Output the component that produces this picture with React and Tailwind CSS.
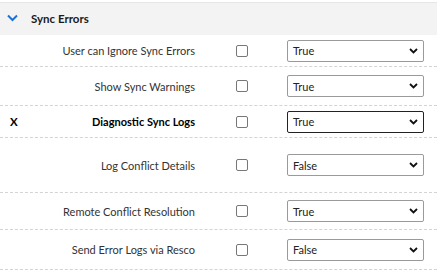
import React from "react";

const rows = [
  { label: "User can Ignore Sync Errors", value: "True", h: "h-[32px]" },
  { label: "Show Sync Warnings", value: "True", h: "h-[39px]" },
  { label: "Diagnostic Sync Logs", value: "True", h: "h-[32px]", bold: true, x: true },
  { label: "Log Conflict Details", value: "False", h: "h-[55px]" },
  { label: "Remote Conflict Resolution", value: "True", h: "h-[37px]" },
  { label: "Send Error Logs via Resco", value: "False", h: "h-[40px]" },
];

function Chevron() {
  return (
    <svg width="9" height="6" viewBox="0 0 9 6" className="shrink-0">
      <path d="M1 1 L4.5 4.5 L8 1" fill="none" stroke="#111" strokeWidth="1.8" />
    </svg>
  );
}

export default function App() {
  return (
    <div className="w-[437px] h-[272px] bg-white overflow-hidden" style={{ fontFamily: 'Lato, "Open Sans", sans-serif' }}>
      <div className="h-[2px] bg-white" />
      <div className="h-[33px] bg-[#f3f3f3] border-t border-[#e6e6e6] flex items-center pl-[7px]">
        <svg width="11" height="8" viewBox="0 0 11 8" className="mt-[-2px]">
          <path d="M1 1.5 L5.5 6 L10 1.5" fill="none" stroke="#1a73d9" strokeWidth="2" />
        </svg>
        <span className="ml-[13px] text-[11.5px] font-bold text-[#1a1a1a] leading-none">Sync Errors</span>
      </div>
      {rows.map((r, i) => (
        <div key={i} className={`${r.h} border-b border-dashed border-[#d4d4d4] flex items-center`}>
          <div className="w-[28px] pl-[10px] text-[11.5px] font-bold text-black leading-none">{r.x ? "X" : ""}</div>
          <div
            className={`w-[167px] text-right text-[11px] leading-none ${r.bold ? "font-bold text-black" : "text-[#333]"}`}
          >
            {r.label}
          </div>
          <div className="w-[92px] flex justify-center">
            <div className="w-[12px] h-[12px] border border-[#777] rounded-[2px] bg-white ml-[2px]" />
          </div>
          <div
            className={`w-[137px] h-[22px] flex items-center justify-between pl-[5px] pr-[5px] rounded-[2px] bg-white ${
              r.bold ? "border-[1.5px] border-[#222]" : "border border-[#9a9a9a]"
            }`}
          >
            <span className="text-[11px] text-[#222] leading-none">{r.value}</span>
            <Chevron />
          </div>
        </div>
      ))}
    </div>
  );
}
